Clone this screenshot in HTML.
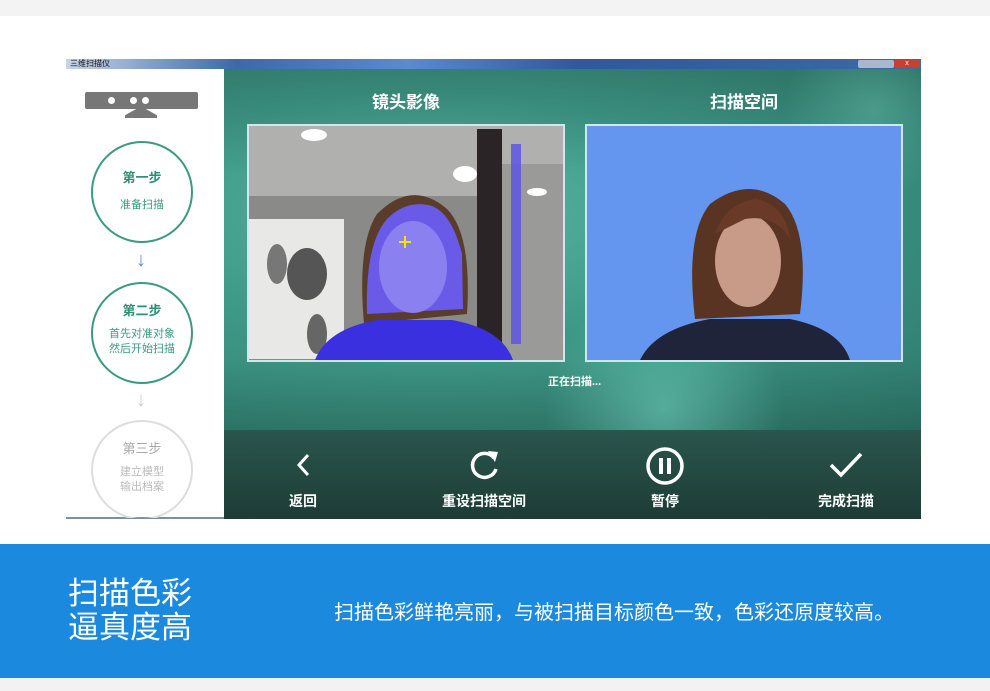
<!DOCTYPE html>
<html><head><meta charset="utf-8"><style>
*{margin:0;padding:0;box-sizing:border-box}
body{width:990px;height:691px;position:relative;background:#fff;font-family:"Liberation Sans","Noto Sans CJK SC",sans-serif;overflow:hidden}
.abs{position:absolute}
.circ{position:absolute;left:91px;width:102px;height:102px;border-radius:50%;border:2px solid #3a9a80;text-align:center}
.circ .t{font-size:13px;color:#2f8f72;margin-top:24px;font-weight:bold}
.circ .s{font-size:11px;color:#3a9a80;margin-top:12px;line-height:15px}
.btn{position:absolute;top:430px;color:#fff;font-size:14px;font-weight:bold;text-align:center}
</style></head><body>
<div class="abs" style="left:0;top:0;width:990px;height:16px;background:#f3f3f3"></div>
<div class="abs" style="left:66px;top:59px;width:855px;height:10px;background:linear-gradient(90deg,#c8d4e6,#3a6aa8 20%,#5a8ad0 40%,#2c5a9a 60%,#3a6aa8 100%)"></div>
<div class="abs" style="left:70px;top:59px;font-size:8px;color:#111;line-height:9px">三维扫描仪</div>
<div class="abs" style="left:858px;top:60px;width:36px;height:8px;background:#aab8cc;border-radius:2px"></div>
<div class="abs" style="left:894px;top:60px;width:26px;height:8px;background:#c84030;border-radius:2px;color:#fff;font-size:7px;text-align:center;line-height:8px">x</div>
<div class="abs" style="left:66px;top:69px;width:158px;height:450px;background:#fff"></div>
<div class="abs" style="left:66px;top:517px;width:158px;height:2px;background:#7a90a8"></div>
<div class="abs" style="left:85px;top:92px;width:113px;height:17px;background:#777;border-radius:2px"></div>
<div class="abs" style="left:108px;top:97px;width:7px;height:7px;border-radius:50%;background:#fff"></div>
<div class="abs" style="left:130px;top:97px;width:7px;height:7px;border-radius:50%;background:#fff"></div>
<div class="abs" style="left:142px;top:97px;width:7px;height:7px;border-radius:50%;background:#fff"></div>
<div class="abs" style="left:125px;top:109px;width:32px;height:9px;background:#777;clip-path:polygon(35% 0,65% 0,100% 70%,100% 100%,0 100%,0 70%)"></div>
<div class="circ" style="top:141px"><div class="t">第一步</div><div class="s">准备扫描</div></div>
<div class="abs" style="left:136px;top:250px;color:#5b8fd0;font-size:20px;line-height:20px">↓</div>
<div class="circ" style="top:282px"><div class="t" style="margin-top:16px">第二步</div><div class="s" style="margin-top:8px">首先对准对象<br>然后开始扫描</div></div>
<div class="abs" style="left:136px;top:390px;color:#ccc;font-size:20px;line-height:20px">↓</div>
<div class="circ" style="top:420px;border-color:#ddd;height:100px;clip-path:inset(0 0 2px 0)"><div class="t" style="color:#aaa;margin-top:16px;font-weight:normal">第三步</div><div class="s" style="color:#bbb;margin-top:8px">建立模型<br>输出档案</div></div>
<div class="abs" style="left:224px;top:69px;width:697px;height:361px;background:radial-gradient(ellipse at 30% 40%,#5bb8a4 0%,#3f9a88 40%,#2e7a6c 100%)"></div>
<div class="abs" style="left:224px;top:69px;width:697px;height:361px;background:radial-gradient(circle at 440px 340px,rgba(120,220,200,.5) 0,rgba(0,0,0,0) 120px),radial-gradient(circle at 650px 40px,rgba(110,200,180,.4) 0,rgba(0,0,0,0) 90px),linear-gradient(180deg,rgba(0,0,0,.15),rgba(0,0,0,0) 30%,rgba(0,0,0,0) 80%,rgba(0,0,0,.15))"></div>
<div class="abs" style="left:224px;top:430px;width:697px;height:89px;background:linear-gradient(180deg,#2a564c,#1d3c36)"></div>
<div class="abs" style="left:248px;top:88px;width:316px;text-align:center;color:#fff;font-size:17px;font-weight:bold">镜头影像</div>
<div class="abs" style="left:586px;top:88px;width:316px;text-align:center;color:#fff;font-size:17px;font-weight:bold">扫描空间</div>
<svg class="abs" style="left:247px;top:124px" width="318" height="238" viewBox="0 0 318 238">
<rect x="0" y="0" width="318" height="238" fill="#d0e8ec"/>
<rect x="2" y="2" width="314" height="234" fill="#8a8a88"/>
<rect x="2" y="2" width="314" height="70" fill="#b0b0ae"/>
<rect x="2" y="95" width="95" height="140" fill="#e8e8e6"/>
<ellipse cx="60" cy="150" rx="20" ry="26" fill="#555"/>
<ellipse cx="30" cy="140" rx="10" ry="20" fill="#777"/>
<ellipse cx="70" cy="210" rx="10" ry="20" fill="#666"/>
<rect x="230" y="5" width="25" height="230" fill="#2a2426"/>
<rect x="255" y="40" width="61" height="196" fill="#9a9a98"/>
<ellipse cx="67" cy="11" rx="13" ry="6" fill="#fff"/>
<ellipse cx="218" cy="50" rx="12" ry="8" fill="#fff"/>
<ellipse cx="290" cy="68" rx="10" ry="4" fill="#fff"/>
<path d="M117 200 Q110 120 130 90 Q165 55 200 85 Q225 110 220 190 Z" fill="#5a3c2a"/>
<path d="M120 190 Q118 120 140 95 Q160 75 185 82 Q205 90 215 130 L216 185 Z" fill="#6a5ae8"/>
<ellipse cx="166" cy="143" rx="34" ry="46" fill="#8a80f0"/>
<path d="M68 236 Q80 205 130 196 L205 196 Q255 205 266 236 Z" fill="#3a30e0"/>
<rect x="264" y="20" width="10" height="200" fill="#5a50e8" opacity=".8"/>
<path d="M152 118 h12 M158 112 v12" stroke="#ffe000" stroke-width="2"/>
</svg>
<svg class="abs" style="left:585px;top:124px" width="318" height="238" viewBox="0 0 318 238">
<rect x="0" y="0" width="318" height="238" fill="#d0e8ec"/>
<rect x="2" y="2" width="314" height="234" fill="#6496f0"/>
<path d="M110 195 Q100 110 125 80 Q165 50 200 80 Q225 110 215 190 Z" fill="#5a3422"/>
<ellipse cx="163" cy="137" rx="33" ry="46" fill="#c89a88"/>
<path d="M130 110 Q140 80 170 75 Q200 80 205 115 Q190 90 160 95 Z" fill="#6a3a28"/>
<path d="M55 236 Q70 205 125 195 L205 195 Q255 205 265 236 Z" fill="#20243a"/>
</svg>
<div class="abs" style="left:548px;top:373px;color:#fff;font-size:11px;font-weight:bold">正在扫描...</div>
<svg class="abs" style="left:294px;top:452px" width="20" height="26"><path d="M14 3 L5 13 L14 23" stroke="#fff" stroke-width="3" fill="none"/></svg>
<div class="btn" style="left:278px;top:491px;width:50px">返回</div>
<svg class="abs" style="left:466px;top:447px" width="36" height="36"><path d="M28 11 A12 12 0 1 0 30 22" stroke="#fff" stroke-width="3.5" fill="none"/><path d="M22 4 L32 5 L29 15 Z" fill="#fff"/></svg>
<div class="btn" style="left:424px;top:491px;width:120px">重设扫描空间</div>
<svg class="abs" style="left:645px;top:446px" width="40" height="40"><circle cx="20" cy="20" r="17" stroke="#fff" stroke-width="3.5" fill="none"/><rect x="14" y="12" width="4" height="16" fill="#fff"/><rect x="22" y="12" width="4" height="16" fill="#fff"/></svg>
<div class="btn" style="left:640px;top:491px;width:50px">暂停</div>
<svg class="abs" style="left:828px;top:450px" width="36" height="30"><path d="M3 15 L13 25 L33 4" stroke="#fff" stroke-width="3.5" fill="none"/></svg>
<div class="btn" style="left:806px;top:491px;width:80px">完成扫描</div>
<div class="abs" style="left:0;top:544px;width:990px;height:134px;background:#1a89de"></div>
<div class="abs" style="left:0;top:678px;width:990px;height:13px;background:#f2f2f2"></div>
<div class="abs" style="left:68px;top:577px;color:#fff;font-size:31px;line-height:34px">扫描色彩<br>逼真度高</div>
<div class="abs" style="left:334px;top:601px;color:#fff;font-size:20px;line-height:24px;white-space:nowrap">扫描色彩鲜艳亮丽，与被扫描目标颜色一致，色彩还原度较高。</div>
</body></html>
